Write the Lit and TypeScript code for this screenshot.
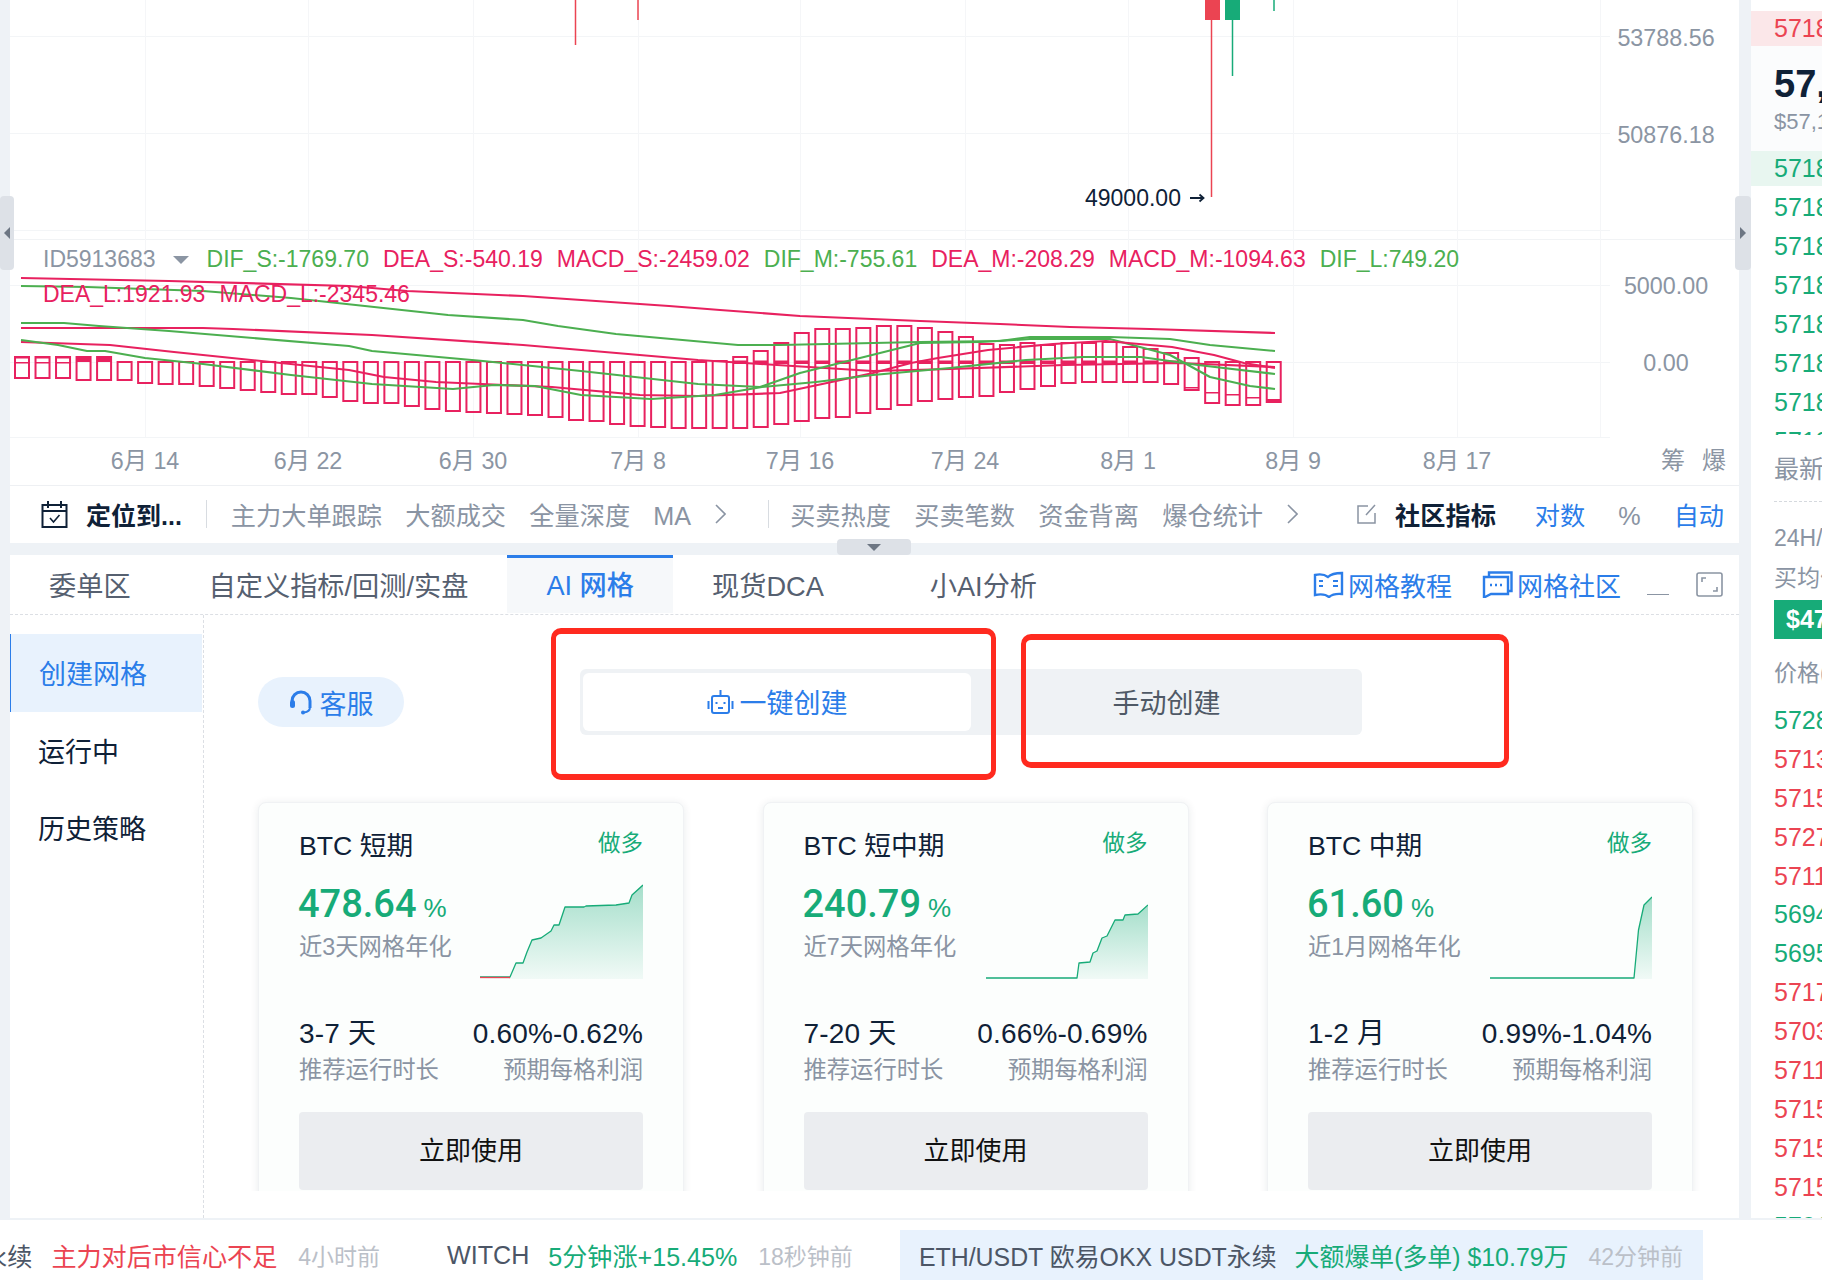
import { LitElement, html, css, svg } from "lit";
import { customElement } from "lit/decorators.js";

const BOTTOMS = [378,378,378,380,380,380,383,384,384,386,388,390,392,394,394,397,401,403,403,406,409,411,412,413,414,415,417,420,421,424,426,427,428,428,428,428,427,424,421,418,417,413,409,405,401,399,397,396,392,389,386,383,382,382,382,382,384,390,403,405,405,402];
const TOPS_TAIL = [361,357,351,343,333,329,329,328,326,326,328,332,337,344,345,343,345,343,343,342,347,349,353,358,362,362,362,362];
const barTop = (i: number) => (i < 5 ? 357 : i < 34 ? 362 : TOPS_TAIL[i - 34]);
const INNER: Record<number, number> = { 57: 387, 58: 392, 59: 394, 60: 397, 61: 399 };

const RED = "#e8215f";
const GREEN = "#4caf50";
const LINES: [string, number[][]][] = [
  [RED, [[21,278],[169,281],[349,286],[407,291],[523,296],[669,306],[720,310],[800,316],[920,321],[1000,324],[1070,327],[1150,329],[1275,333]]],
  [GREEN, [[21,286],[87,287],[203,291],[291,298],[448,315],[523,320],[558,326],[616,334],[738,345],[780,345],[920,342],[1000,341],[1030,337],[1110,337],[1170,339],[1210,345],[1275,351]]],
  [RED, [[21,328],[203,328],[233,329],[372,335],[523,345],[698,360],[777,365],[873,371],[950,369],[1064,365],[1179,363],[1275,367]]],
  [GREEN, [[21,323],[64,323],[99,326],[169,331],[349,346],[372,351],[483,361],[581,371],[698,384],[760,387],[800,373],[860,358],[920,343],[980,342],[1030,339],[1110,339],[1170,355],[1210,377],[1250,386],[1275,389]]],
  [RED, [[21,342],[110,345],[174,352],[349,370],[384,377],[436,382],[552,387],[640,395],[698,396],[780,393],[827,383],[873,373],[911,363],[938,358],[988,350],[1053,344],[1106,341],[1172,347],[1214,355],[1244,363],[1275,368]]],
  [GREEN, [[21,340],[58,345],[87,351],[105,351],[145,358],[203,364],[291,375],[372,384],[453,389],[494,385],[535,386],[581,395],[651,399],[715,395],[762,387],[816,382],[873,375],[950,368],[1026,360],[1083,357],[1141,357],[1198,365],[1275,374]]],
];

const XTICKS: [number, string][] = [[145,"6月 14"],[308,"6月 22"],[473,"6月 30"],[638,"7月 8"],[800,"7月 16"],[965,"7月 24"],[1128,"8月 1"],[1293,"8月 9"],[1457,"8月 17"]];
const YTICKS: [number, string][] = [[38,"53788.56"],[135,"50876.18"],[286,"5000.00"],[363,"0.00"]];
const HLINES = [36,133,230,285,362,437];
const VLINES = [145,308,473,638,800,965,1128,1293,1457,1600];
const LEGEND: [string, string][] = [["g","DIF_S:-1769.70"],["r","DEA_S:-540.19"],["r","MACD_S:-2459.02"],["g","DIF_M:-755.61"],["r","DEA_M:-208.29"],["r","MACD_M:-1094.63"],["g","DIF_L:749.20"],["r","DEA_L:1921.93"],["r","MACD_L:-2345.46"]];

const CARDS = [
  { name: "BTC 短期", rate: "478.64", sub: "近3天网格年化", dur: "3-7 天", profit: "0.60%-0.62%", w: 163, red: 30,
    pts: [[0,93],[30,93],[36,79],[43,79],[47,68],[52,56],[61,54],[71,47],[74,41],[79,41],[85,23],[104,23],[106,22],[136,21],[149,19],[152,11],[163,1]] },
  { name: "BTC 短中期", rate: "240.79", sub: "近7天网格年化", dur: "7-20 天", profit: "0.66%-0.69%", w: 162, red: 0,
    pts: [[0,94],[91,94],[93,79],[104,78],[107,69],[111,67],[116,54],[121,52],[129,36],[137,36],[139,31],[152,30],[162,21]] },
  { name: "BTC 中期", rate: "61.60", sub: "近1月网格年化", dur: "1-2 月", profit: "0.99%-1.04%", w: 162, red: 0,
    pts: [[0,94],[144,94],[148.5,46],[154,21],[162,13]] },
];

const ASK = [["g","57188.0"],["g","57187.5"],["g","57186.0"],["g","57185.5"],["g","57184.0"],["g","57183.5"],["g","57182.0"]];
const TRADES = [["g","5728"],["r","5713"],["r","5715"],["r","5727"],["r","5711"],["g","5694"],["g","5695"],["r","5717"],["r","5703"],["r","5711"],["r","5715"],["r","5715"],["r","5715"],["g","5701"]];

@customElement("app-root")
export class AppRoot extends LitElement {
  static styles = css`
    :host { display: block; position: relative; width: 1822px; height: 1286px; overflow: hidden; background: #fff; color: #0f2137;
      font-family: "Liberation Sans", "Noto Sans CJK SC", sans-serif; }
    * { box-sizing: border-box; }
    .top { display: flex; height: 1218px; background: #eef2f6; padding-left: 10px; }
    .main { width: 1729px; flex: none; display: flex; flex-direction: column; }
    .gline { height: 2px; background: #eef2f6; }

    .chart { height: 486px; flex: none; position: relative; background: #fff; overflow: hidden; border-bottom: 1px solid #eef0f3; }
    .chart svg.plot { position: absolute; left: 0; top: 0; }
    .xt, .yt { position: absolute; transform: translate(-50%, -50%); font-size: 23.3px; line-height: 28px; color: #8b95a3; white-space: nowrap; }
    .low { position: absolute; left: 1075px; top: 184px; display: flex; align-items: center; gap: 9px; font-size: 23px; line-height: 28px; color: #0f2137; }
    .legend { position: absolute; left: 33px; top: 242px; width: 1500px; display: flex; flex-wrap: wrap; column-gap: 14px; font-size: 23px; line-height: 35px; }
    .legend .id { color: #8b95a3; display: flex; align-items: center; gap: 17px; margin-right: 4px; }
    .tri { width: 0; height: 0; border-left: 8px solid transparent; border-right: 8px solid transparent; border-top: 8px solid #8b95a3; }
    .g { color: #4caf50; } .r { color: #e8215f; }
    .side-mark { position: absolute; right: 13px; top: 447px; display: flex; gap: 17px; font-size: 24px; line-height: 28px; color: #8b95a3; }
    .handle { position: absolute; z-index: 3; background: #dde1e7; border-radius: 4px; display: flex; align-items: center; justify-content: center; }
    .handle.left { left: 0; top: 196px; width: 14px; height: 74px; }
    .handle.right { left: 1735px; top: 196px; width: 16px; height: 74px; }
    .handle.down { left: 837px; top: 539px; width: 74px; height: 16px; }
    .tl { width: 0; height: 0; border-top: 6px solid transparent; border-bottom: 6px solid transparent; border-right: 6px solid #6d7683; }
    .tr { width: 0; height: 0; border-top: 6px solid transparent; border-bottom: 6px solid transparent; border-left: 6px solid #6d7683; }
    .td { width: 0; height: 0; border-left: 7px solid transparent; border-right: 7px solid transparent; border-top: 7px solid #6d7683; }

    .toolbar { height: 57px; flex: none; background: #fff; display: flex; align-items: center; padding: 0 15px 1px 31px; font-size: 25.2px; color: #8a94a3; white-space: nowrap; }
    .locate { font-size: 25px; font-weight: 700; color: #0f2137; margin-left: 18px; }
    .sep { width: 1px; height: 28px; background: #d8dce1; flex: none; }
    .sep.a { margin: 0 24px 0 24px; } .sep.b { margin: 0 21px 0 42px; }
    .grp { display: flex; gap: 23.3px; align-items: baseline; }
    .chev { margin-left: 23px; flex: none; }
    .tools { margin-left: auto; display: flex; align-items: baseline; }
    .tools svg { align-self: center; }
    .strong { font-weight: 700; color: #0f2137; margin-left: 18px; }
    .blue { color: #2b7de9; }
    .m39 { margin-left: 39px; } .m33 { margin-left: 33px; }

    .gap12 { height: 12px; flex: none; }
    .panel { flex: 1; background: #fff; display: flex; flex-direction: column; min-height: 0; }
    .tabs { height: 60px; flex: none; display: flex; align-items: stretch; border-bottom: 1px dashed #dcdfe4; font-size: 27.2px; color: #566070; }
    .tab { padding: 0 39px 2px; display: flex; align-items: center; white-space: nowrap; }
    .tab.on { background: #f6f8fa; border-top: 3px solid #2b7de9; color: #2b7de9; font-weight: 500; padding-bottom: 5px; margin-bottom: 1px; }
    .tab.ai { margin-left: 28px; }
    .links { margin-left: auto; display: flex; align-items: center; font-size: 26px; color: #2b7de9; padding-right: 16px; }
    .links .ln { display: flex; align-items: center; gap: 4px; }
    .links .ln + .ln { margin-left: 30px; }
    .mini { width: 22px; height: 1px; background: #8b95a3; margin: 20px 0 0 26px; }
    .expand { margin-left: 27px; }

    .body { flex: 1; display: flex; min-height: 0; }
    .menu { width: 194px; flex: none; border-right: 1px dashed #dcdfe4; padding-top: 19px; font-size: 27px; }
    .mi { height: 77px; display: flex; align-items: center; padding-left: 28px; margin-right: 1px; color: #0f2137; }
    .mi.on { background: #e8f2fd; color: #2b7de9; border-left: 1px solid #2b7de9; padding: 0 0 2px 28px; height: 78px; }
    .content { flex: 1; min-width: 0; position: relative; }
    .scroll { height: 576px; overflow: hidden; padding: 54px 46px 0 54px; }
    .actions { display: flex; align-items: center; gap: 176px; }
    .pill { width: 146px; height: 50px; border-radius: 25px; background: #e8f2fd; color: #2b7de9; font-size: 27px; display: flex; align-items: center; justify-content: center; gap: 6px; }
    .seg { width: 782px; height: 66px; padding: 4px 0 4px 3px; background: #eff2f5; border-radius: 6px; display: flex; font-size: 27px; color: #4f5966; }
    .seg > div { display: flex; align-items: center; justify-content: center; padding-bottom: 1px; }
    .seg .act { width: 388px; background: #fff; border-radius: 6px; color: #2b7de9; gap: 6px; }
    .seg .off { flex: 1; }
    .cards { display: grid; grid-template-columns: repeat(3, 426px); column-gap: 78.5px; margin-top: 67px; }
    .card { height: 440px; padding: 0 40px; background: #fcfefd; border: 1px solid #f0f2f4; border-radius: 8px; box-shadow: 0 1px 8px rgba(20,40,60,.09); }
    .head { height: 36px; margin-top: 25px; display: flex; justify-content: space-between; font-size: 26.7px; line-height: 36px; color: #0f2137; }
    .long { font-size: 22.5px; line-height: 32px; color: #17ab78; }
    .mid { height: 115px; display: flex; justify-content: space-between; align-items: flex-end; }
    .mid .l { align-self: flex-start; padding-top: 17px; }
    .rate { height: 46px; line-height: 46px; margin-left: -1px; font-family: Roboto, "Liberation Sans", sans-serif; font-size: 38px; font-weight: 500; color: #17ab78; white-space: nowrap; }
    .rate span { font-size: 26px; font-weight: 400; margin-left: 7px; font-family: "Liberation Sans", sans-serif; }
    .cap { font-size: 23.3px; line-height: 30px; color: #8a94a3; white-space: nowrap; }
    .mid .cap { margin-top: 5px; }
    .stats { display: flex; justify-content: space-between; margin-top: 37px; }
    .stats .rt { text-align: right; }
    .val { font-size: 28px; letter-spacing: .2px; line-height: 36px; color: #0f2137; white-space: nowrap; }
    .stats .cap { margin-top: 3px; }
    .use { height: 78px; margin-top: 27px; padding-bottom: 5px; background: #ebedf0; border-radius: 4px; display: flex; align-items: center; justify-content: center; font-size: 26px; color: #111; }
    .note { position: absolute; border-style: solid; border-color: #ff2a1f; border-width: 6px 5px; pointer-events: none; }
    .note.a { left: 347px; top: 13px; width: 445px; height: 152px; border-radius: 10px; }
    .note.b { left: 817px; top: 19px; width: 488px; height: 134px; border-radius: 10px; }

    .gut { width: 12px; flex: none; }
    .book { flex: 1; min-width: 0; background: #fff; overflow: hidden; font-size: 25px; white-space: nowrap; display: flex; flex-direction: column; padding-top: 11px; }
    .row { height: 39px; line-height: 39px; padding-left: 23px; flex: none; }
    .row.hl { height: 35px; line-height: 35px; }
    .hl.r { background: #fbe7e9; color: #eb4452; }
    .hl.g { background: #e8f6f0; color: #17ab78; }
    .book .g { color: #17ab78; } .book .r { color: #eb4452; }
    .now { height: 105px; padding: 16px 0 0 23px; background: #fbfcfd; flex: none; }
    .now .b { font-size: 38px; line-height: 44px; font-weight: 700; color: #0f2137; }
    .now .s { font-size: 22px; line-height: 32px; color: #8a94a3; }
    .asks { height: 249px; padding-top: 2px; overflow: hidden; flex: none; }
    .last { height: 67px; flex: none; margin-left: 23px; border-bottom: 1px dashed #d5d9de; line-height: 68px; color: #8a94a3; }
    .info { flex: none; padding-left: 23px; color: #8a94a3; font-size: 23px; line-height: 32px; }
    .info.a { margin-top: 20px; }
    .info.c { margin-top: 8px; }
    .info.d { margin-top: 18px; }
    .price { height: 39px; flex: none; margin: 6px 0 0 23px; background: #17ab78; color: #fff; font-weight: 700; font-size: 25px; line-height: 39px; padding-left: 12px; }
    .trades { padding-top: 12px; flex: 1; min-height: 0; overflow: hidden; }
    .trades .row { height: 38.9px; line-height: 38.9px; }

    .ticker { height: 66px; padding-top: 4px; background: #fff; display: flex; align-items: center; font-size: 25.1px; white-space: nowrap; overflow: hidden; color: #4c5666; }
    .item { display: flex; align-items: center; height: 50px; gap: 19px; flex: none; }
    .t { font-size: 23px; color: #bbc0c8; margin-left: 2px; }
    .up { color: #17ab78; } .dn { color: #eb4452; }
    .first { margin-left: -68px; }
    .i2 { margin-left: 67px; }
    .i3 { margin-left: 47px; background: #e8f2fd; padding: 0 0 0 19px; width: 803px; font-size: 24.9px; gap: 18px; }
  `;

  private plot() {
    return html`<svg class="plot" width="1729" height="486" viewBox="10 0 1729 486" fill="none">
      ${HLINES.map((y) => svg`<line x1="10" x2="1610" y1=${y + 0.5} y2=${y + 0.5} stroke="#f3f5f7"></line>`)}
      <line x1="10" x2="1739" y1="239.5" y2="239.5" stroke="#f1f3f5"></line>
      ${VLINES.map((x) => svg`<line x1=${x + 0.5} x2=${x + 0.5} y1="0" y2="437" stroke="#f5f6f8"></line>`)}
      <line x1="575.5" x2="575.5" y1="0" y2="45" stroke="#eb4452" stroke-width="1.5"></line>
      <line x1="638" x2="638" y1="0" y2="20" stroke="#eb4452" stroke-width="1.5"></line>
      <line x1="1211.5" x2="1211.5" y1="0" y2="197" stroke="#eb4452" stroke-width="1.5"></line>
      <rect x="1205" y="0" width="15" height="20" fill="#eb4452"></rect>
      <line x1="1232.5" x2="1232.5" y1="0" y2="76" stroke="#17ab78" stroke-width="1.5"></line>
      <rect x="1225" y="0" width="15" height="20" fill="#17ab78"></rect>
      <line x1="1274" x2="1274" y1="0" y2="11" stroke="#17ab78" stroke-width="1.5"></line>
      ${BOTTOMS.map((b, i) => {
        const x = 22 + i * 20.52 - 7;
        const t = barTop(i);
        const thick = (i >= 35 && i <= 56) || i === 3 || i === 4;
        return svg`<rect x=${x} y=${t} width="14" height=${b - t} stroke=${RED} stroke-width="2"></rect>
          ${i >= 5 && !thick ? null : svg`<rect x=${x} y=${i < 5 ? 357 : 360.5} width="14" height=${i === 3 || i === 4 ? 5 : i < 3 ? 1.5 : 3.5} fill=${RED}></rect>`}
          ${i < 3 ? svg`<rect x=${x} y="362" width="14" height="1.5" fill=${RED}></rect>` : null}
          ${INNER[i] ? svg`<rect x=${x} y=${INNER[i]} width="14" height=${i === 61 ? 3 : 1.5} fill=${RED}></rect>` : null}`;
      })}
      ${LINES.map(([c, p]) => svg`<polyline points=${p.map((q) => q.join(",")).join(" ")} stroke=${c} stroke-width="2.1" stroke-linejoin="round"></polyline>`)}
    </svg>`;
  }

  private spark(c: (typeof CARDS)[number], i: number) {
    const pts = c.pts.map((p) => p.join(",")).join(" ");
    const h = 95;
    const end = c.pts[c.pts.length - 1][0];
    const start = c.pts.find((p) => p[1] < 93.5 && p[0] > 0) || [0, 0];
    const startX = c.pts[c.pts.indexOf(start) - 1][0];
    return html`<svg width=${c.w} height=${h} viewBox="0 0 ${c.w} ${h}" fill="none">
      <defs><linearGradient id="sp${i}" x1="0" y1="0" x2="0" y2="1">
        <stop offset="0" stop-color="#17ab78" stop-opacity=".38"></stop>
        <stop offset="1" stop-color="#17ab78" stop-opacity=".05"></stop>
      </linearGradient></defs>
      <polygon points="${startX},${h} ${c.pts.slice(c.pts.indexOf(start)).map((p) => p.join(",")).join(" ")} ${end},${h}" fill="url(#sp${i})"></polygon>
      <polyline points=${pts} stroke="#17ab78" stroke-width="1.3" stroke-linejoin="round"></polyline>
      ${c.red ? svg`<line x1="0" x2=${c.red} y1="93.5" y2="93.5" stroke="#eb4452" stroke-width="1.3"></line>` : null}
    </svg>`;
  }

  render() {
    return html`
      <div class="top">
        <div class="main">
          <div class="chart">
            ${this.plot()}
            ${XTICKS.map(([x, s]) => html`<span class="xt" style="left:${x - 10}px;top:461px">${s}</span>`)}
            ${YTICKS.map(([y, s]) => html`<span class="yt" style="left:1656px;top:${y}px">${s}</span>`)}
            <div class="low">49000.00
              <svg width="15" height="10" viewBox="0 0 15 10" fill="none" stroke="#0f2137" stroke-width="1.8"><path d="M0 5h13M9.5 1.5 13.5 5l-4 3.5"></path></svg>
            </div>
            <div class="legend">
              <span class="id">ID5913683<i class="tri"></i></span>
              ${LEGEND.map(([c, s]) => html`<span class=${c}>${s}</span>`)}
            </div>
            <div class="side-mark"><span>筹</span><span>爆</span></div>
          </div>
          <div class="toolbar">
            <svg width="27" height="28" viewBox="0 0 27 28" fill="none" stroke="#0f2137" stroke-width="2"><path d="M1.5 5h24v22h-24zM1.5 11h24M7 1v7M20 1v7"></path><path d="M9 18l3.5 4 6-7" stroke-width="1.6"></path></svg>
            <span class="locate">定位到...</span>
            <i class="sep a"></i>
            <div class="grp"><span>主力大单跟踪</span><span>大额成交</span><span>全量深度</span><span>MA</span></div>
            <svg class="chev" width="12" height="20" viewBox="0 0 12 20" fill="none" stroke="#8a94a3" stroke-width="1.6"><path d="M2 1l9 9-9 9"></path></svg>
            <i class="sep b"></i>
            <div class="grp"><span>买卖热度</span><span>买卖笔数</span><span>资金背离</span><span>爆仓统计</span></div>
            <svg class="chev" width="12" height="20" viewBox="0 0 12 20" fill="none" stroke="#8a94a3" stroke-width="1.6"><path d="M2 1l9 9-9 9"></path></svg>
            <div class="tools">
              <svg width="20" height="20" viewBox="0 0 20 20" fill="none" stroke="#8a94a3" stroke-width="1.5"><path d="M11 2H1v17h17V9M9 11l9-10"></path></svg>
              <span class="strong">社区指标</span>
              <span class="blue m39">对数</span>
              <span class="m33">%</span>
              <span class="blue m33">自动</span>
            </div>
          </div>
          <div class="gap12"></div>
          <div class="panel">
            <div class="tabs">
              <div class="tab">委单区</div>
              <div class="tab">自定义指标/回测/实盘</div>
              <div class="tab on">AI 网格</div>
              <div class="tab">现货DCA</div>
              <div class="tab ai">小AI分析</div>
              <div class="links">
                <span class="ln">
                  <svg width="31" height="27" viewBox="0 0 31 27" fill="none" stroke="#2b7de9" stroke-width="2.4"><path d="M2 4c4-1 9-1 13 2 3-3 9-4 14-4v21c-5-.5-10 .5-13 3-3-2.500-9-3-14-2z"></path><path d="M20 10h5M20 15h5M6 10h4M6 15h4" stroke-width="2.2"></path></svg>
                  网格教程
                </span>
                <span class="ln">
                  <svg width="31" height="27" viewBox="0 0 31 27" fill="none" stroke="#2b7de9" stroke-width="2.4"><path d="M7 6V1.500h22.500V20H26"></path><path d="M2 6h24v17H9l-6 3H2z"></path><path d="M8 14h2M13 14h2M18 14h2" stroke-width="2.600"></path></svg>
                  网格社区
                </span>
                <i class="mini"></i>
                <svg class="expand" width="27" height="25" viewBox="0 0 27 25" fill="none" stroke="#8b95a3" stroke-width="1.6"><rect x="1" y="1" width="25" height="23" rx="2"></rect><path d="M6 10V6h4M21 15v4h-4"></path></svg>
              </div>
            </div>
            <div class="body">
              <div class="menu">
                <div class="mi on">创建网格</div>
                <div class="mi">运行中</div>
                <div class="mi">历史策略</div>
              </div>
              <div class="content">
                <div class="scroll">
                  <div class="actions">
                    <div class="pill">
                      <svg width="25" height="26" viewBox="0 0 25 26" fill="none" stroke="#2b7de9"><path d="M3 12a9 9 0 0 1 18 0v7" stroke-width="3"></path><rect x="1" y="11" width="5" height="8" rx="2.500" fill="#2b7de9" stroke="none"></rect><path d="M21 18c0 3-2 5-6 5.500" stroke-width="2"></path><circle cx="14" cy="23.500" r="2" fill="#2b7de9" stroke="none"></circle></svg>
                      客服
                    </div>
                    <div class="seg">
                      <div class="act">
                        <svg width="27" height="26" viewBox="0 0 27 26" fill="none" stroke="#2b7de9" stroke-width="2"><rect x="5" y="7" width="17" height="17" rx="2"></rect><path d="M13.500 1v6M1.500 12v8M25.500 12v8"></path><path d="M9.500 13v2M17.500 13v2M11 19h5"></path></svg>
                        一键创建
                      </div>
                      <div class="off">手动创建</div>
                    </div>
                  </div>
                  <div class="cards">
                    ${CARDS.map((c, i) => html`
                      <div class="card">
                        <div class="head"><span>${c.name}</span><span class="long">做多</span></div>
                        <div class="mid">
                          <div class="l">
                            <div class="rate">${c.rate}<span>%</span></div>
                            <div class="cap">${c.sub}</div>
                          </div>
                          ${this.spark(c, i)}
                        </div>
                        <div class="stats">
                          <div><div class="val">${c.dur}</div><div class="cap">推荐运行时长</div></div>
                          <div class="rt"><div class="val">${c.profit}</div><div class="cap">预期每格利润</div></div>
                        </div>
                        <div class="use">立即使用</div>
                      </div>`)}
                  </div>
                </div>
                <div class="note a"></div>
                <div class="note b"></div>
              </div>
            </div>
          </div>
        </div>
        <div class="gut"></div>
        <div class="book">
          <div class="row hl r">57189.5</div>
          <div class="now">
            <div class="b">57,187.0</div>
            <div class="s">$57,187.00</div>
          </div>
          <div class="row hl g">57188.5</div>
          <div class="asks">
            ${ASK.map(([c, s]) => html`<div class="row ${c}">${s}</div>`)}
          </div>
          <div class="last">最新成交</div>
          <div class="info a">24H/均价</div>
          <div class="info c">买均价格</div>
          <div class="price">$47,215</div>
          <div class="info d">价格(USDT)</div>
          <div class="trades">
            ${TRADES.map(([c, s]) => html`<div class="row ${c}">${s}7.50</div>`)}
          </div>
        </div>
      </div>
      <div class="gline"></div>
      <div class="ticker">
        <div class="item first"><span>BTC永续</span><span class="dn">主力对后市信心不足</span><span class="t">4小时前</span></div>
        <div class="item i2"><span>WITCH</span><span class="up">5分钟涨+15.45%</span><span class="t">18秒钟前</span></div>
        <div class="item i3"><span>ETH/USDT 欧易OKX USDT永续</span><span class="up">大额爆单(多单) $10.79万</span><span class="t">42分钟前</span></div>
      </div>
      <div class="handle left"><i class="tl"></i></div>
      <div class="handle right"><i class="tr"></i></div>
      <div class="handle down"><i class="td"></i></div>
    `;
  }
}
